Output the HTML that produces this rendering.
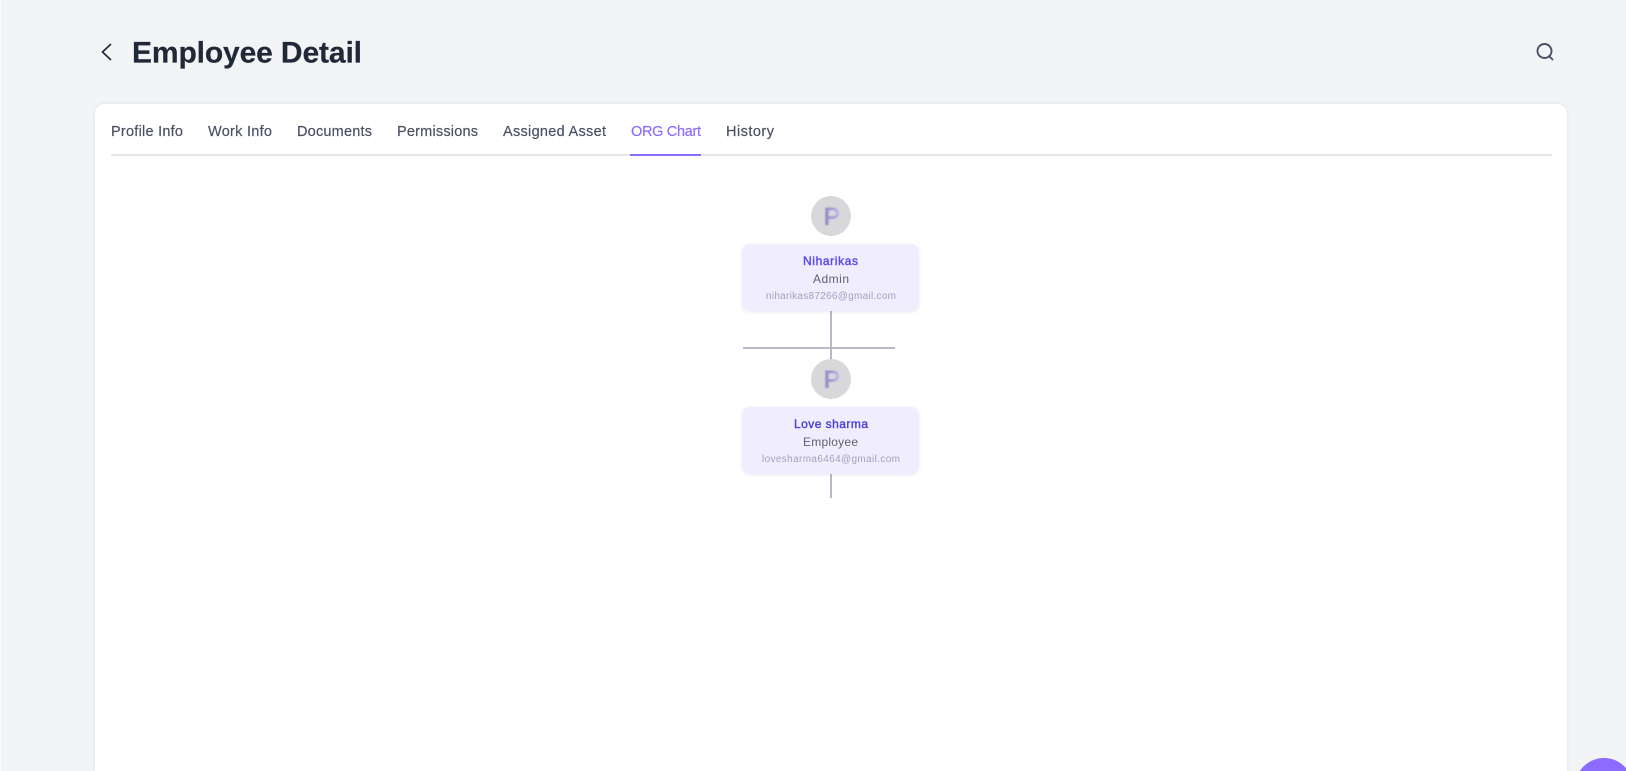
<!DOCTYPE html>
<html lang="en">
<head>
<meta charset="utf-8">
<title>Employee Detail</title>
<style>
html,body{margin:0;padding:0;width:1626px;height:771px;overflow:hidden;background:#f3f4f6;font-family:"Liberation Sans",sans-serif}
#page{position:relative;width:1626px;height:771px;overflow:hidden;background:#f3f4f6}
.abs{position:absolute}
#edge{left:0;top:0;width:1px;height:771px;background:#fbfbfc}
#card{left:95px;top:104px;width:1472px;height:667px;background:#fff;border-radius:10px 10px 0 0;box-shadow:0 0 4px rgba(60,60,90,.10);clip-path:inset(-6px -6px 0 -6px)}
#tabline{left:111px;top:154px;width:1441px;height:2px;background:#e5e7eb}
#tabactive{left:630px;top:154px;width:71px;height:2px;background:#8b6cff}
.node{left:742px;width:177px;height:67px;background:#f0eefe;border-radius:8px;box-shadow:0 1px 3px rgba(90,80,160,.13)}
.ln{background:#b9b8c6}
.av{left:811px;width:40px;height:40px;border-radius:50%;background:#d8d7da}
svg{position:absolute;left:0;top:0;overflow:hidden;display:block}
text{font-family:"Liberation Sans",sans-serif}
.tab{font-size:14.5px;fill:#4b5063;stroke:#4b5063;stroke-width:.18px}
.nm{font-size:12px;stroke-width:.4px}
.pg{font-size:25px;font-weight:700;filter:blur(.6px)}
</style>
</head>
<body>
<div id="page">
<div class="abs" id="edge"></div>
<div class="abs" id="card"></div>
<div class="abs" id="tabline"></div>
<div class="abs" id="tabactive"></div>

<div class="abs ln" style="left:830px;top:311px;width:2px;height:48px"></div>
<div class="abs ln" style="left:743px;top:347px;width:152px;height:2px"></div>
<div class="abs ln" style="left:830px;top:474px;width:2px;height:24px"></div>

<div class="abs av" style="top:196px"></div>
<div class="abs av" style="top:359px"></div>
<div class="abs node" style="top:244px"></div>
<div class="abs node" style="top:407px"></div>

<svg width="1626" height="771" viewBox="0 0 1626 771">
  <defs>
    <linearGradient id="pf" x1="0" x2="1" y1="0" y2="0">
      <stop offset="0" stop-color="#9a90c4"/>
      <stop offset=".45" stop-color="#a298cf"/>
      <stop offset="1" stop-color="#cbc4ec"/>
    </linearGradient>
  </defs>
  <path d="M1579.8 771 A29 29 0 0 1 1626 768.1 L1626 771 Z" fill="#8b6cff"/>
  <path d="M111 44 L102.5 52 L111 60" fill="none" stroke="#1f2937" stroke-width="1.7"/>
  <text x="132" y="62.5" font-size="30" font-weight="700" fill="#1f2937" stroke="#1f2937" stroke-width=".2" textLength="230">Employee Detail</text>
  <circle cx="1544.5" cy="51" r="7" fill="none" stroke="#4b5068" stroke-width="1.9"/>
  <path d="M1549.5 56.5 L1553 60" fill="none" stroke="#4b5068" stroke-width="1.9"/>

  <text class="tab" x="111" y="136" textLength="72">Profile Info</text>
  <text class="tab" x="208" y="136" textLength="64">Work Info</text>
  <text class="tab" x="297" y="136" textLength="75">Documents</text>
  <text class="tab" x="397" y="136" textLength="81">Permissions</text>
  <text class="tab" x="503" y="136" textLength="103">Assigned Asset</text>
  <text class="tab" x="631" y="136" textLength="70" style="fill:#8b6cff;stroke:#8b6cff">ORG Chart</text>
  <text class="tab" x="726" y="136" textLength="48">History</text>

  <text class="pg" x="823.5" y="225" fill="url(#pf)">P</text>
  <text class="pg" x="823.5" y="388" fill="url(#pf)">P</text>

  <text class="nm" x="803" y="265" fill="#5a48f0" stroke="#5a48f0" textLength="55">Niharikas</text>
  <text x="813" y="283" font-size="12" fill="#5f6270" textLength="36">Admin</text>
  <text x="766" y="299" font-size="10" fill="#a0a3b4" textLength="130">niharikas87266@gmail.com</text>

  <text class="nm" x="794" y="428" fill="#4a42d8" stroke="#4a42d8" textLength="74">Love sharma</text>
  <text x="803" y="446" font-size="12" fill="#5f6270" textLength="55">Employee</text>
  <text x="762" y="462" font-size="10" fill="#a0a3b4" textLength="138">lovesharma6464@gmail.com</text>
</svg>
</div>
</body>
</html>
